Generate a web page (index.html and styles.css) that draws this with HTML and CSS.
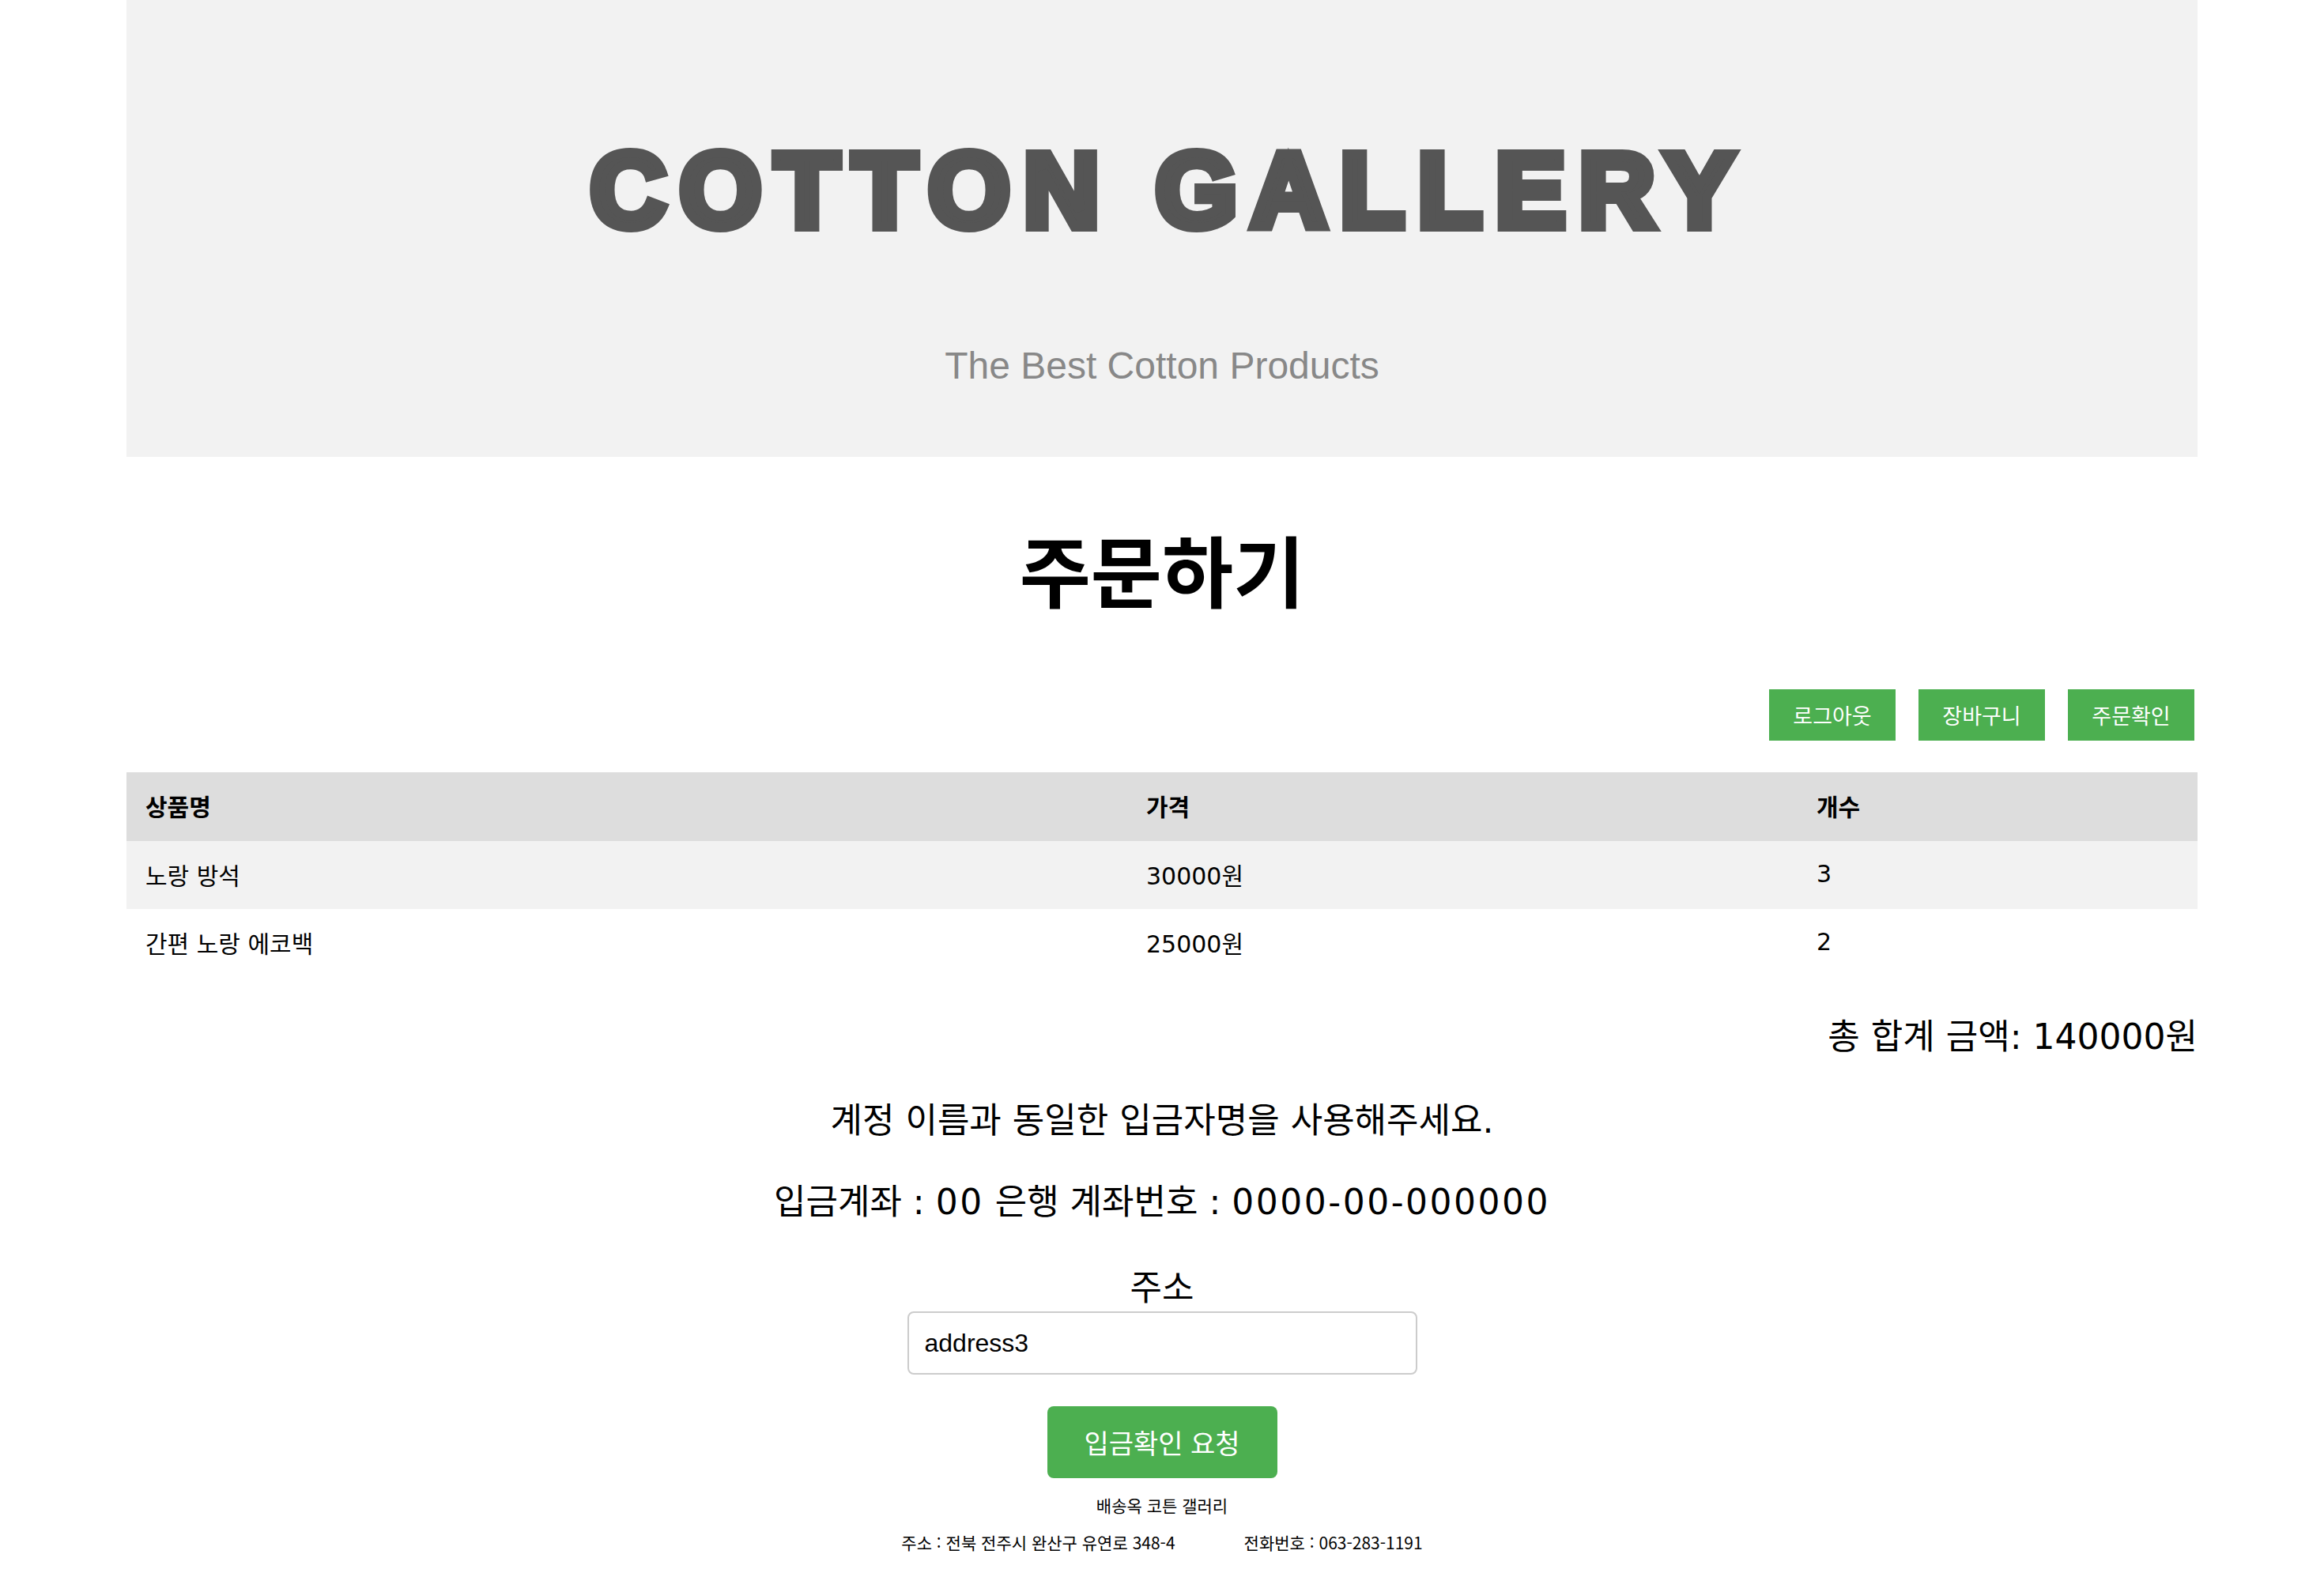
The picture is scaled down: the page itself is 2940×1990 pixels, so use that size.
FILE: index.html
```html
<!DOCTYPE html>
<html lang="ko">
<head>
<meta charset="utf-8">
<title>주문하기 - COTTON GALLERY</title>
<link rel="stylesheet" href="styles.css">
</head>
<body>
<div class="page">
  <header class="hero">
    <h1 class="brand">COTTON GALLERY</h1>
    <p class="tagline">The Best Cotton Products</p>
  </header>

  <h2 class="page-title">주문하기</h2>

  <nav class="actions">
    <a class="btn" href="#">로그아웃</a>
    <a class="btn" href="#">장바구니</a>
    <a class="btn" href="#">주문확인</a>
  </nav>

  <table class="cart">
    <thead>
      <tr>
        <th class="col-name">상품명</th>
        <th class="col-price">가격</th>
        <th class="col-qty">개수</th>
      </tr>
    </thead>
    <tbody>
      <tr class="odd">
        <td>노랑 방석</td>
        <td>30000원</td>
        <td>3</td>
      </tr>
      <tr>
        <td>간편 노랑 에코백</td>
        <td>25000원</td>
        <td>2</td>
      </tr>
    </tbody>
  </table>

  <p class="total">총 합계 금액: 140000원</p>

  <form class="order-form">
    <p class="notice first">계정 이름과 동일한 입금자명을 사용해주세요.</p>
    <p class="notice second">입금계좌 : <span class="num">00</span> 은행 계좌번호 : <span class="num">0000-00-000000</span></p>
    <label class="addr-label" for="addr">주소</label>
    <input class="addr-input" id="addr" type="text" value="address3">
    <button class="submit" type="button">입금확인 요청</button>
  </form>

  <footer class="footer">
    <p class="footer-name">배송옥 코튼 갤러리</p>
    <p class="footer-info"><span>주소 : 전북 전주시 완산구 유연로 348-4</span><span>전화번호 : 063-283-1191</span></p>
  </footer>
</div>
</body>
</html>
```

FILE: styles.css
```css
* {
  box-sizing: border-box;
}

html, body {
  margin: 0;
  padding: 0;
  background: #ffffff;
}

body {
  font-family: "Noto Sans CJK KR", "Noto Sans", sans-serif;
  color: #000;
}

.page {
  width: 2620px;
  margin: 0 auto;
  display: flex;
  flex-direction: column;
}

/* ---------- header ---------- */
.hero {
  height: 578px;
  background: #f2f2f2;
  padding-top: 176px;
  display: flex;
  flex-direction: column;
  align-items: center;
}

.brand {
  margin: 0;
  padding-left: 18px;
  font-family: "Liberation Sans", Arial, sans-serif;
  font-weight: 700;
  font-size: 133px;
  line-height: 131px;
  letter-spacing: 17px;
  color: #555555;
  -webkit-text-stroke: 12px #555555;
}

.tagline {
  margin: 132px 0 0;
  font-family: "Liberation Sans", Arial, sans-serif;
  font-size: 48px;
  line-height: 48px;
  color: #888888;
}

/* ---------- title ---------- */
.page-title {
  margin: 92px 0 0;
  text-align: center;
  font-size: 98px;
  line-height: 96px;
  font-weight: 700;
}

/* ---------- action buttons ---------- */
.actions {
  margin-top: 106px;
  display: flex;
  justify-content: flex-end;
  gap: 29px;
  padding-right: 4px;
}

.btn {
  width: 160px;
  height: 65px;
  display: flex;
  align-items: center;
  justify-content: center;
  background: #4caf50;
  color: #ffffff;
  font-size: 27px;
  text-decoration: none;
}

/* ---------- table ---------- */
.cart {
  margin-top: 40px;
  width: 2620px;
  border-collapse: collapse;
  font-family: "DejaVu Sans", "Noto Sans CJK KR", sans-serif;
  font-size: 30px;
}

.cart th,
.cart td {
  text-align: left;
  padding: 0 24px 3px;
  vertical-align: middle;
}

.cart th {
  height: 87px;
  background: #dddddd;
  font-weight: 700;
}

.cart td {
  height: 86px;
}

.col-name { width: 1266px; }
.col-price { width: 848px; }
.col-qty { width: 506px; }

.cart tr.odd td {
  background: #f2f2f2;
}

/* ---------- total ---------- */
.total {
  margin: 46px 0 0;
  text-align: right;
  font-family: "DejaVu Sans", "Noto Sans CJK KR", sans-serif;
  font-size: 44px;
  line-height: 60px;
}

/* ---------- order form ---------- */
.order-form {
  display: flex;
  flex-direction: column;
  align-items: center;
}

.notice {
  margin: 0;
  font-family: "DejaVu Sans", "Noto Sans CJK KR", sans-serif;
  font-size: 44px;
  line-height: 60px;
}

.notice.first {
  margin-top: 46px;
}

.notice.second {
  margin-top: 43px;
}

.notice .num {
  letter-spacing: 2.5px;
}

.addr-label {
  margin-top: 45px;
  font-size: 44px;
  line-height: 60px;
}

.addr-input {
  margin-top: 3px;
  width: 645px;
  height: 80px;
  border: 2px solid #cccccc;
  border-radius: 8px;
  padding: 0 20px;
  font-family: "Liberation Sans", Arial, sans-serif;
  font-size: 32px;
  color: #000;
  background: #fff;
}

.submit {
  margin-top: 40px;
  width: 291px;
  height: 91px;
  border: none;
  border-radius: 8px;
  background: #4caf50;
  color: #ffffff;
  font-family: "Noto Sans CJK KR", sans-serif;
  font-size: 34px;
  cursor: pointer;
}

/* ---------- footer ---------- */
.footer {
  display: flex;
  flex-direction: column;
  align-items: center;
  font-size: 21px;
  line-height: 30px;
}

.footer p {
  margin: 0;
}

.footer-name {
  margin-top: 19px !important;
}

.footer-info {
  margin-top: 17px !important;
  display: flex;
  gap: 87px;
}
```
